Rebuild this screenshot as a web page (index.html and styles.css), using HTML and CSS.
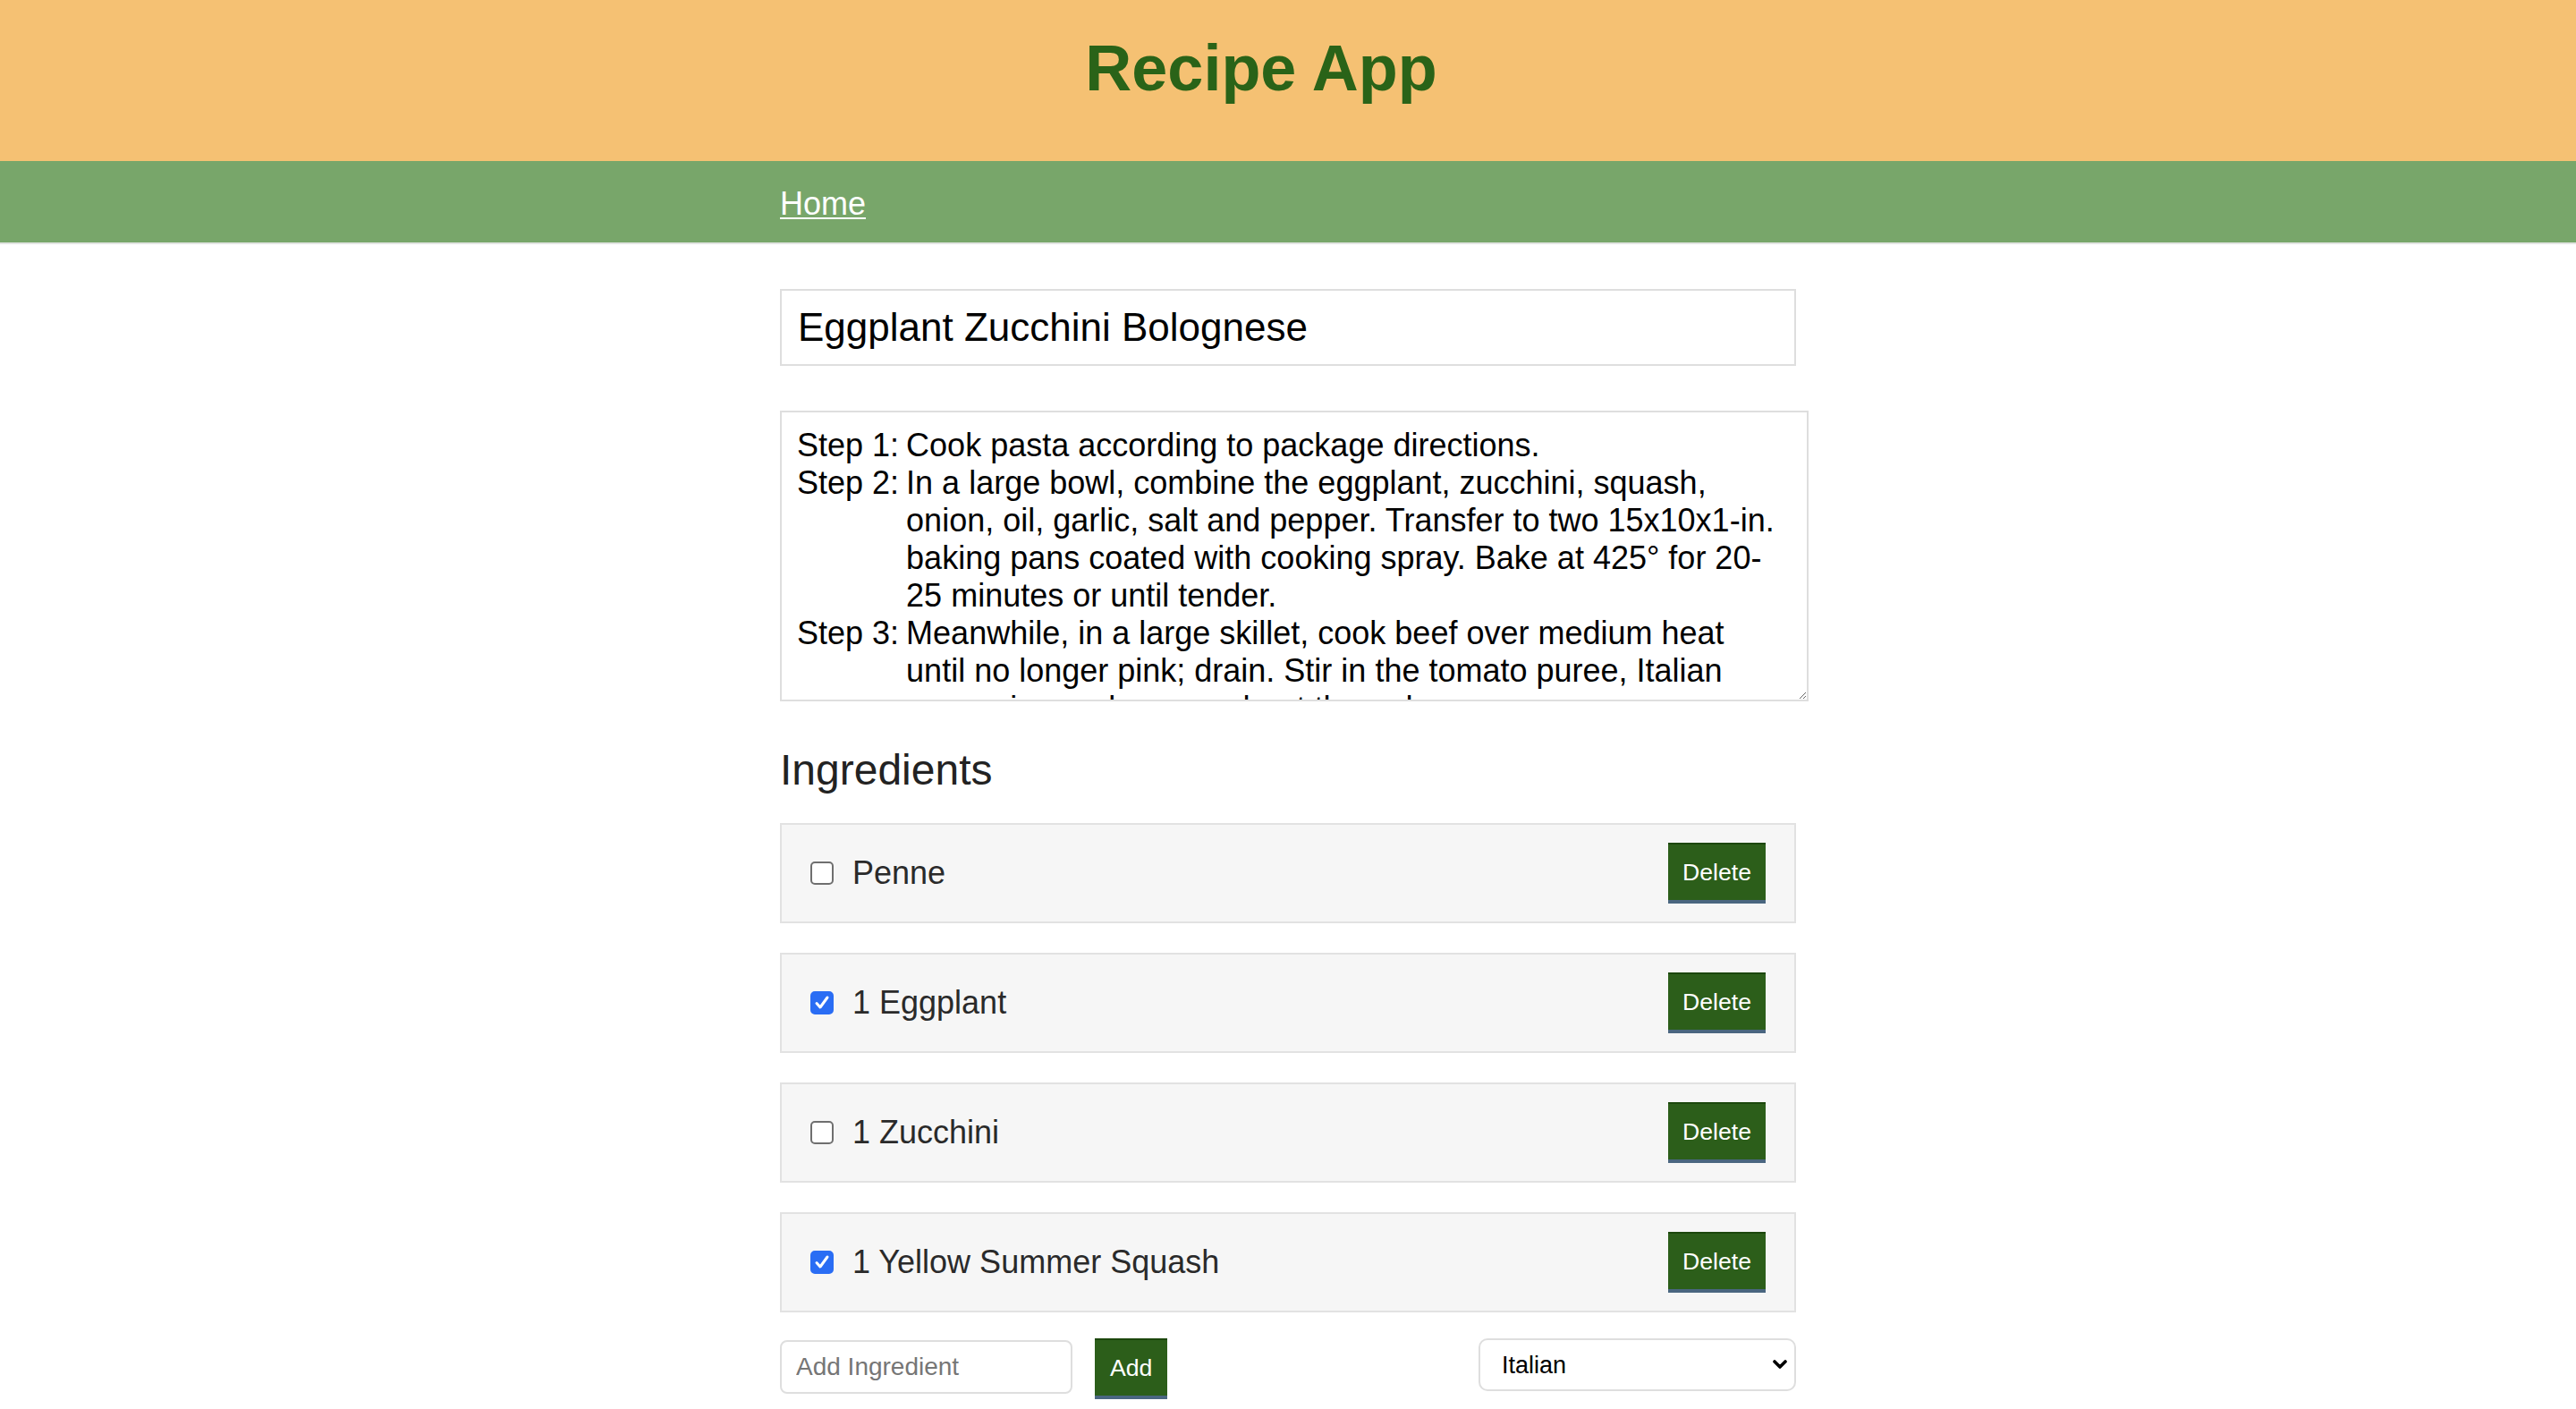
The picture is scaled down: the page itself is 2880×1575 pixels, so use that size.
FILE: index.html
```html
<!DOCTYPE html>
<html lang="en">
<head>
<meta charset="utf-8">
<title>Recipe App</title>
<link rel="stylesheet" href="styles.css">
</head>
<body>
<header class="app-header">
  <h1 class="app-title">Recipe App</h1>
</header>
<nav class="app-nav">
  <div class="container">
    <a class="nav-link" href="#">Home</a>
  </div>
</nav>
<main class="container main">
  <input class="title-input" type="text" value="Eggplant Zucchini Bolognese">
  <div class="steps">
    <div class="step"><span class="step-label">Step 1:</span><span class="step-text">Cook pasta according to package directions.</span></div>
    <div class="step"><span class="step-label">Step 2:</span><span class="step-text">In a large bowl, combine the eggplant, zucchini, squash,<br>onion, oil, garlic, salt and pepper. Transfer to two 15x10x1-in.<br>baking pans coated with cooking spray. Bake at 425° for 20-<br>25 minutes or until tender.</span></div>
    <div class="step"><span class="step-label">Step 3:</span><span class="step-text">Meanwhile, in a large skillet, cook beef over medium heat<br>until no longer pink; drain. Stir in the tomato puree, Italian<br>seasoning and pepper; heat through.</span></div>
  </div>
  <h2 class="section-title">Ingredients</h2>
  <ul class="ingredients">
    <li class="ingredient"><label class="ing-label"><input type="checkbox" class="check"><span>Penne</span></label><button class="btn">Delete</button></li>
    <li class="ingredient"><label class="ing-label"><input type="checkbox" class="check" checked><span>1 Eggplant</span></label><button class="btn">Delete</button></li>
    <li class="ingredient"><label class="ing-label"><input type="checkbox" class="check"><span>1 Zucchini</span></label><button class="btn">Delete</button></li>
    <li class="ingredient"><label class="ing-label"><input type="checkbox" class="check" checked><span>1 Yellow Summer Squash</span></label><button class="btn">Delete</button></li>
  </ul>
  <div class="add-row">
    <input class="add-input" type="text" placeholder="Add Ingredient">
    <button class="btn btn-add">Add</button>
    <div class="select-wrap">
      <select class="cuisine">
        <option>Italian</option>
        <option>Mexican</option>
        <option>Chinese</option>
      </select>
      <svg class="chevron" width="16" height="11" viewBox="0 0 16 11"><path d="M2 2 L8 8 L14 2" fill="none" stroke="#000" stroke-width="3.6" stroke-linecap="round" stroke-linejoin="round"/></svg>
    </div>
  </div>
</main>
</body>
</html>
```

FILE: styles.css
```css
* { box-sizing: border-box; }
html, body { margin: 0; padding: 0; background: #fff; }
body { font-family: "Liberation Sans", Arial, Helvetica, sans-serif; color: #000; }

.app-header {
  background: #f5c173;
  height: 180px;
  padding-top: 35px;
  padding-right: 60px;
  text-align: center;
}
.app-title {
  margin: 0;
  font-size: 72px;
  line-height: 82px;
  font-weight: bold;
  color: #2a6318;
}

.app-nav {
  background: #78a66a;
  height: 93px;
  padding-top: 27px;
  border-bottom: 2px solid #e2e4e2;
}
.container { width: 1136px; margin: 0 auto; }
.nav-link {
  color: #fff;
  font-size: 36px;
  line-height: 42px;
  text-decoration: underline;
  text-decoration-thickness: 2px;
  text-underline-offset: 3px;
}

.main { padding-top: 50px; }

.title-input {
  display: block;
  width: 1136px;
  height: 86px;
  border: 2px solid #dedede;
  padding: 0 17px 0 18px;
  font-family: inherit;
  font-size: 44px;
  color: #000;
  background: #fff;
  outline: none;
}

.steps {
  margin-top: 50px;
  width: 1150px;
  height: 325px;
  border: 2px solid #dedede;
  padding: 16px 17px;
  font-size: 36px;
  line-height: 42px;
  color: #000;
  overflow: hidden;
  resize: vertical;
}
.step { display: flex; gap: 8px; white-space: nowrap; }
.step-label { flex: none; }

.section-title {
  margin: 49px 0 0;
  font-size: 48px;
  line-height: 56px;
  font-weight: normal;
  color: #222;
}

.ingredients {
  list-style: none;
  margin: 31px 0 0;
  padding: 0;
  display: flex;
  flex-direction: column;
  gap: 33px;
}
.ingredient {
  height: 112px;
  background: #f6f6f6;
  border: 2px solid #e2e2e2;
  padding: 0 32px;
  display: flex;
  align-items: center;
  justify-content: space-between;
}
.ing-label {
  display: flex;
  align-items: center;
  gap: 21px;
  font-size: 36px;
  color: #2a2a2a;
}
.check {
  appearance: none;
  -webkit-appearance: none;
  flex: none;
  width: 26px;
  height: 26px;
  margin: 0;
  border: 2px solid #6f6f6f;
  border-radius: 5px;
  background: #fff;
}
.check:checked {
  border-color: #2a6df4;
  background: #2a6df4 url("data:image/svg+xml,%3Csvg xmlns='http://www.w3.org/2000/svg' viewBox='0 0 22 22'%3E%3Cpath d='M5 11.5 L9 16 L17 5' fill='none' stroke='%23fff' stroke-width='3' stroke-linecap='round' stroke-linejoin='round'/%3E%3C/svg%3E") center / 100% 100% no-repeat;
}

.btn {
  height: 68px;
  padding: 0 16px;
  background: #2c5e1a;
  color: #fff;
  font-family: inherit;
  font-size: 26.67px;
  border: none;
  border-top: 2px solid #1c470d;
  border-bottom: 4px solid #4a6680;
  border-radius: 0;
}
.btn-add { padding: 0 17px; margin-left: 25px; }

.add-row {
  margin-top: 29px;
  display: flex;
  align-items: flex-start;
}
.add-input {
  margin-top: 2px;
  width: 327px;
  height: 60px;
  border: 2px solid #dedede;
  border-radius: 8px;
  padding: 0 16px;
  font-family: inherit;
  font-size: 28px;
  color: #000;
  outline: none;
}
.add-input::placeholder { color: #767676; }

.select-wrap { margin-left: auto; position: relative; }
.cuisine {
  appearance: none;
  -webkit-appearance: none;
  width: 355px;
  height: 59px;
  border: 2px solid #dedede;
  border-radius: 10px;
  background: #fff;
  padding: 0 24px;
  font-family: inherit;
  font-size: 27px;
  color: #000;
  outline: none;
}
.chevron { position: absolute; right: 10px; top: 24px; }
```
